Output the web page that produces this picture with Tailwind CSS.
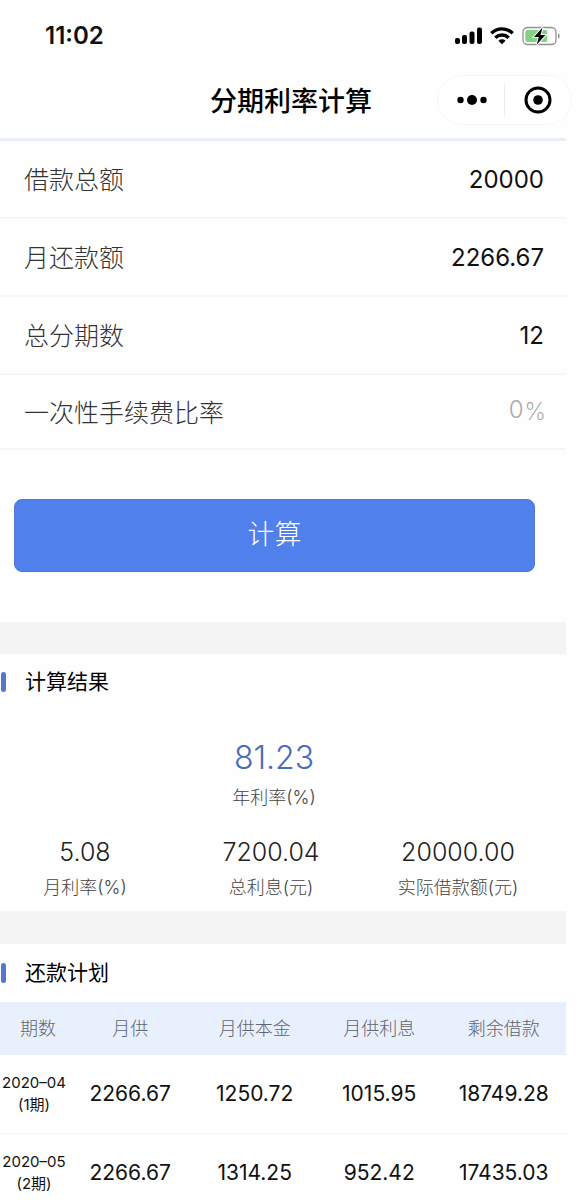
<!DOCTYPE html>
<html lang="zh-CN">
<head>
  <meta charset="UTF-8">
  <meta name="viewport" content="width=device-width, initial-scale=1.0">
  <title>分期利率计算</title>
  <script src="https://cdn.jsdelivr.net/npm/@tailwindcss/browser@4"></script>
</head>
<body class="h-screen overflow-hidden bg-[#fefefe] font-['Inter','Noto_Sans_CJK_SC',sans-serif] text-[#111]">

  <!-- Status Bar -->
  <div class="flex h-18 items-center justify-between pl-[45px] pr-[22px]">
    <span class="text-[24px] font-semibold">11:02</span>
    <div class="flex items-center gap-2">
      <svg class="h-[18px] w-7" viewBox="0 0 28 18" fill="#000">
        <rect x="1" y="11" width="5" height="6" rx="2" />
        <rect x="8" y="8" width="5" height="9" rx="2" />
        <rect x="15.500" y="4.500" width="5" height="12.500" rx="2" />
        <rect x="23" y="0.500" width="5" height="16.500" rx="2" />
      </svg>
      <svg class="h-[18px] w-6" viewBox="0 0 24 18" fill="none" stroke="#000" stroke-width="3.400">
        <path d="M1.300 6.200a15.500 15.500 0 0 1 21.400 0" />
        <path d="M5.300 10.700a9.800 9.800 0 0 1 13.400 0" />
        <path d="M12 17.300l-3.600-3.500a5.200 5.200 0 0 1 7.200 0z" fill="#000" stroke="none" />
      </svg>
      <svg class="h-5 w-[39px]" viewBox="0 0 39 20">
        <rect x="1" y="1.500" width="33" height="17" rx="4.500" fill="#fff" stroke="#8f9490" stroke-width="1.300" />
        <rect x="3.300" y="4" width="22" height="12" rx="2" fill="#85d085" />
        <path d="M36 7.500c2.300.6 2.300 4.400 0 5z" fill="#8f9490" />
        <path d="M20.500 1.500L12 11h4.800l-2 7.500L23.500 9h-5z" fill="#000" stroke="#fff" stroke-width="2" paint-order="stroke" />
      </svg>
    </div>
  </div>

  <!-- Title Bar -->
  <header class="relative mr-[17px] flex h-[69px] items-center justify-center border-b-3 border-[#eaf0f5] pb-[6px] pl-4">
    <h1 class="text-[27px] font-medium leading-8 text-black">分期利率计算</h1>
    <div class="absolute -right-[6px] top-[3px] flex h-[50px] w-[135px] items-center rounded-full border border-[#f7f7f7] bg-white">
      <button type="button" aria-label="更多" class="flex h-full flex-1 items-center justify-center">
        <svg class="h-4 w-8" viewBox="0 0 32 16">
          <circle cx="5.500" cy="8" r="3.200" /><circle cx="17" cy="8" r="5" /><circle cx="28.500" cy="8" r="3.200" />
        </svg>
      </button>
      <span class="h-8 w-px bg-[#ececec]"></span>
      <button type="button" aria-label="关闭" class="flex h-full flex-1 items-center justify-center">
        <svg class="size-7" viewBox="0 0 28 28">
          <circle cx="14" cy="14" r="12" fill="none" stroke="#000" stroke-width="3" /><circle cx="14" cy="14" r="4.800" />
        </svg>
      </button>
    </div>
  </header>

  <!-- Loan Form -->
  <form class="mr-[17px]" onsubmit="return false">
    <div class="flex h-[78px] items-center justify-between border-b-2 border-[#f6f6f6] pl-6 pr-[22px]">
      <label for="total" class="pt-1 text-[25px] font-light text-[#333]">借款总额</label>
      <input id="total" type="text" value="20000" class="h-10 w-40 text-right text-[24px]">
    </div>
    <div class="flex h-[78px] items-center justify-between border-b-2 border-[#f6f6f6] pl-6 pr-[22px]">
      <label for="monthly" class="pt-1 text-[25px] font-light text-[#333]">月还款额</label>
      <input id="monthly" type="text" value="2266.67" class="h-10 w-40 text-right text-[24px]">
    </div>
    <div class="flex h-[78px] items-center justify-between border-b-2 border-[#f6f6f6] pl-6 pr-[22px]">
      <label for="periods" class="pt-1 text-[25px] font-light text-[#333]">总分期数</label>
      <input id="periods" type="text" value="12" class="h-10 w-40 text-right text-[24px]">
    </div>
    <div class="flex h-[75px] items-center border-b-2 border-[#f6f6f6] pl-6 pr-5">
      <label for="fee" class="flex-1 pt-1 text-[25px] font-light text-[#333]">一次性手续费比率</label>
      <input id="fee" type="text" placeholder="0" class="h-10 w-24 pb-1 text-right text-[24px] font-light placeholder:text-[#aaa]">
      <span class="pl-px text-[24px] font-extralight text-[#999]">%</span>
    </div>
    <div class="pb-[50px] pl-[14px] pr-[31px] pt-[49px]">
      <button type="submit" class="h-[73px] w-full rounded-lg border border-[#5577cc] bg-[#5080ec] text-[27px] font-light text-white">计算</button>
    </div>
  </form>

  <div class="mr-[17px] h-8 bg-[#f4f4f4]"></div>

  <!-- Result Section -->
  <section class="mr-[17px] h-[257px]">
    <div class="flex h-14 items-center gap-[19px]">
      <span class="ml-px h-5 w-[5px] rounded-sm bg-[#5578cc]"></span>
      <h2 class="text-[21px] leading-8 text-black">计算结果</h2>
    </div>
    <div class="pr-[18px] pt-7 text-center">
      <p class="text-[32px] font-light leading-10 text-[#4a6cb8]">81.23</p>
      <p class="pt-[6px] text-[18px] font-light leading-7 text-[#444]">年利率(%)</p>
    </div>
    <div class="grid grid-cols-[170fr_202fr_172fr] pr-[22px] pt-6 text-center">
      <div>
        <p class="text-[25px] font-light leading-8 text-[#222]">5.08</p>
        <p class="pt-[6px] text-[18px] font-light leading-7 text-[#444]">月利率(%)</p>
      </div>
      <div>
        <p class="text-[25px] font-light leading-8 text-[#222]">7200.04</p>
        <p class="pt-[6px] text-[18px] font-light leading-7 text-[#444]">总利息(元)</p>
      </div>
      <div>
        <p class="text-[25px] font-light leading-8 text-[#222]">20000.00</p>
        <p class="whitespace-nowrap pt-[6px] text-[18px] font-light leading-7 text-[#444]">实际借款额(元)</p>
      </div>
    </div>
  </section>

  <div class="mr-[17px] h-[33px] bg-[#f4f4f4]"></div>

  <!-- Repayment Plan -->
  <section>
    <div class="flex h-[58px] items-center gap-[19px]">
      <span class="ml-px h-5 w-[5px] rounded-sm bg-[#5578cc]"></span>
      <h2 class="text-[21px] leading-8 text-black">还款计划</h2>
    </div>
    <div class="pr-[17px]">
      <table class="w-full table-fixed text-center">
        <thead class="bg-[#e9f0fd] text-[18px] text-[#60656f]">
          <tr class="h-[53px]">
            <th class="w-[12%] pl-2 font-light">期数</th>
            <th class="font-light">月供</th>
            <th class="font-light">月供本金</th>
            <th class="font-light">月供利息</th>
            <th class="font-light">剩余借款</th>
          </tr>
        </thead>
        <tbody class="text-[21px]">
          <tr class="h-[79px] border-b-2 border-[#fafafa]">
            <td class="text-[15px] leading-[22px]">2020–04<br>(1期)</td>
            <td>2266.67</td>
            <td>1250.72</td>
            <td>1015.95</td>
            <td>18749.28</td>
          </tr>
          <tr class="h-[76px]">
            <td class="text-[15px] leading-[22px]">2020–05<br>(2期)</td>
            <td>2266.67</td>
            <td>1314.25</td>
            <td>952.42</td>
            <td>17435.03</td>
          </tr>
        </tbody>
      </table>
    </div>
  </section>

</body>
</html>
